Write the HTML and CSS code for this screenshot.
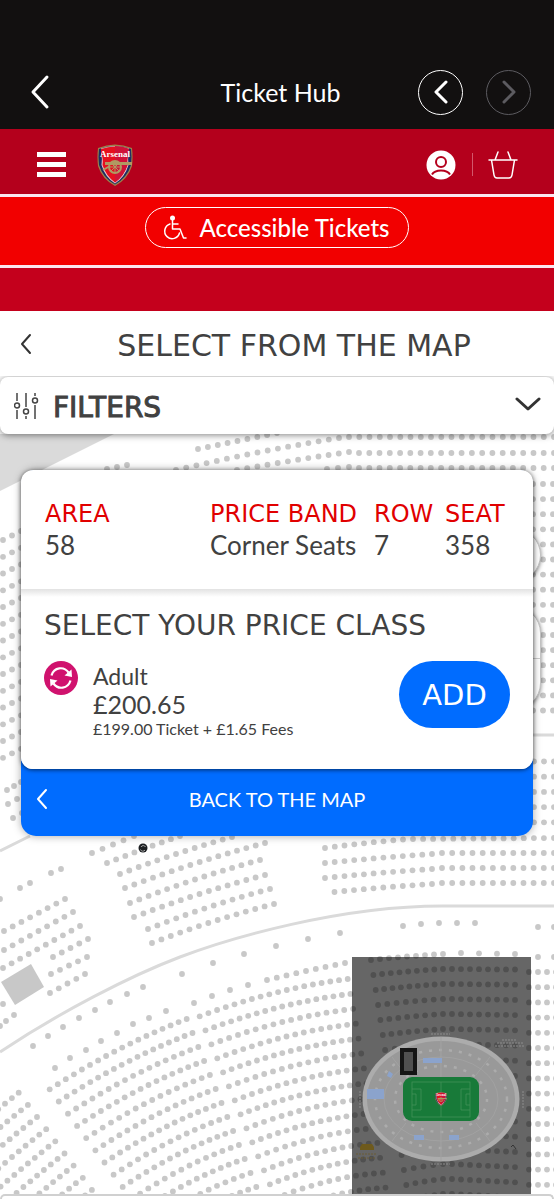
FILE: index.html
```html
<!DOCTYPE html>
<html lang="en">
<head>
<meta charset="utf-8">
<meta name="viewport" content="width=device-width, initial-scale=1">
<title>Ticket Hub</title>
<link rel="stylesheet" href="styles.css">
</head>
<body>
<svg class="defs" aria-hidden="true">
  <symbol id="crest" viewBox="0 0 36 44">
    <path d="M1 5Q18-2 35 5Q36 14 35 23Q31 36 18 43Q5 36 1 23Q0 14 1 5Z" fill="#9c824a"/>
    <path d="M2 6Q18 0 34 6Q35 14 34 22Q30 35 18 41.500Q6 35 2 22Q1 14 2 6Z" fill="#1d2d64"/>
    <path d="M4 5.500Q18 .5 32 5.500V9Q30.500 16 31.500 22Q28 34 18 40.500Q8 34 4.500 22Q5.500 16 4 9Z" fill="#e8c9d0"/>
    <path d="M4 6Q18 1 32 6V9Q29.500 16 30.500 22Q27 33 18 39.500Q9 33 5.500 22Q6.500 16 4 9Z" fill="#e5101f"/>
    <path d="M18 3Q26 3 32 6V9Q29.500 16 30.500 22Q27 33 18 39.500Z" fill="#cf1238"/>
    <g fill="none" stroke="#b09a62" stroke-width="2">
      <path d="M8 20.500H35" stroke-width="3"/>
      <circle cx="18" cy="24" r="6"/>
      <path d="M12 24H24M18 18V30M14 20L22 28M22 20L14 28" stroke-width="1"/>
      <path d="M6 27L13 23"/>
    </g>
    <text x="18" y="14" text-anchor="middle" class="crest-name">Arsenal</text>
  </symbol>
</svg>

<header class="app-bar">
  <button class="app-back" aria-label="Back"><svg width="20" height="36" viewBox="0 0 20 36"><path d="M17 3L3 18L17 33"/></svg></button>
  <h1 class="app-title">Ticket Hub</h1>
  <div class="history">
    <button class="round" aria-label="Previous page"><svg width="14" height="24" viewBox="0 0 14 24"><path d="M12 2L2 12L12 22"/></svg></button>
    <button class="round round-off" aria-label="Next page" disabled><svg width="14" height="24" viewBox="0 0 14 24"><path d="M2 2L12 12L2 22"/></svg></button>
  </div>
</header>

<nav class="site-bar">
  <button class="menu" aria-label="Menu"><span></span><span></span><span></span></button>
  <a class="logo" href="#" aria-label="Home"><svg width="36" height="44"><use href="#crest"/></svg></a>
  <a class="account" href="#" aria-label="Account">
    <svg width="30" height="30" viewBox="0 0 30 30"><circle cx="15" cy="15" r="14.500" fill="#fff"/><g fill="none" stroke="#b4001c" stroke-width="2"><circle cx="15" cy="12" r="5"/><path d="M6 24.500C9 19 21 19 24 24.500"/></g></svg>
  </a>
  <a class="basket" href="#" aria-label="Basket">
    <svg width="30" height="30" viewBox="0 0 30 30" fill="none" stroke="#fff" stroke-width="1.500" stroke-linecap="round" stroke-linejoin="round"><path d="M1 10H29M3.500 10L6 25Q6.500 28 9 28H21Q23.500 28 24 25L26.500 10M7 10L10 2M23 10L20 2"/></svg>
  </a>
</nav>

<div class="access-bar">
  <a class="access-link" href="#">
    <svg width="24" height="26" viewBox="0 0 24 26"><circle cx="9.500" cy="3" r="2.500" fill="#fff"/><g fill="none" stroke="#fff" stroke-width="1.500" stroke-linecap="round" stroke-linejoin="round"><path d="M9.500 5V14H17L20.500 23H23M9.500 9H15"/><path d="M7 9A7.500 7.500 0 1 0 16.500 18"/></g></svg>
    Accessible Tickets
  </a>
</div>
<div class="strip"></div>

<div class="page-head">
  <button class="page-back" aria-label="Back"><svg width="12" height="22" viewBox="0 0 12 22"><path d="M10 2L2 11L10 20"/></svg></button>
  <h2>SELECT FROM THE MAP</h2>
</div>

<button class="filters">
  <svg width="28" height="28" viewBox="0 0 28 28" fill="none" stroke="#444" stroke-width="1.500"><path d="M3 1V9M3 18V27M12 1V15M12 24V27M21 1V4M21 13V27"/><circle cx="3" cy="13.500" r="2.500"/><circle cx="12" cy="19.500" r="2.500"/><circle cx="21" cy="8.500" r="2.500"/></svg>
  <span>FILTERS</span>
  <svg class="chevron" width="26" height="16" viewBox="0 0 26 16"><path d="M2 3L13 13L24 3"/></svg>
</button>

<main class="map">
  <svg class="seats" viewBox="0 434 554 765" preserveAspectRatio="xMinYMin slice" aria-hidden="true">
    <path d="M0 434H114L0 491Z" fill="#dadada"/>
    <path d="M1 982L31 964L44 987L15 1005Z" fill="#c8c8c8"/>
    <g fill="none" stroke="#dadada" stroke-width="3">
      <path d="M0 1052C60 1012 130 976 180 957S340 906 442 906H554"/>
      <path d="M0 851L30 836M530 735H554"/>
    </g>
    <g id="seat-dots" fill="#c8c8c8"></g>
    <circle cx="143" cy="848" r="4.500" fill="#1c1f22"/>
    <path d="M141 847A2.500 2.500 0 0 1 145.500 847M145 850A2.500 2.500 0 0 1 140.500 849.500" fill="none" stroke="#aaa"/>
  </svg>

  <button class="tool tool-reset" aria-label="Reset map"></button>
  <div class="tool tool-zoom"><button aria-label="Zoom in"></button><button aria-label="Zoom out"></button></div>

  <section class="ticket">
    <div class="card">
      <dl class="facts">
        <div><dt>AREA</dt><dd>58</dd></div>
        <div><dt>PRICE BAND</dt><dd>Corner Seats</dd></div>
        <div><dt>ROW</dt><dd>7</dd></div>
        <div><dt>SEAT</dt><dd>358</dd></div>
      </dl>
      <div class="price">
        <h3>SELECT YOUR PRICE CLASS</h3>
        <div class="option">
          <svg class="resale" width="34" height="34" viewBox="0 0 34 34"><circle cx="17" cy="17" r="17" fill="#d0126e"/><g fill="none" stroke="#fff" stroke-width="2.200"><path d="M7.500 14.500C10 6 20 5 24.500 11.500"/><path d="M26.500 19.500C24 28 14 29 9.500 22.500"/></g><path d="M20.500 14.500L28 16L27.500 8.500ZM13.500 19.500L6 18L6.500 25.500Z" fill="#fff"/></svg>
          <div class="amounts">
            <p class="kind">Adult</p>
            <p class="total">£200.65</p>
            <p class="split">£199.00 Ticket + £1.65 Fees</p>
          </div>
          <button class="add">ADD</button>
        </div>
      </div>
    </div>
    <button class="to-map">
      <svg width="12" height="22" viewBox="0 0 12 22"><path d="M10 2L2 11L10 20"/></svg>
      <span>BACK TO THE MAP</span>
    </button>
  </section>

  <aside class="overview" aria-label="Stadium overview">
    <svg viewBox="0 0 179 237">
      <ellipse cx="89" cy="142" rx="78.500" ry="62.500" fill="#acacac"/>
      <ellipse cx="89" cy="142" rx="74" ry="58" fill="#999"/>
      <g fill="none" stroke="#acacac" stroke-width="2.500" stroke-dasharray="3 7">
        <ellipse cx="89" cy="142" rx="66" ry="49"/>
        <ellipse cx="89" cy="142" rx="46" ry="33"/>
      </g>
      <g fill="none" stroke="#a2a2a2" stroke-width="1"><ellipse cx="89" cy="142" rx="57" ry="42"/><path d="M40 100L54 118M138 100L124 118M40 184L54 166M138 184L124 166M89 80V120M89 164V204"/></g>
      <g fill="#8ba3cc"><path d="M71 101H90V106H71ZM15 132H32V142H15ZM62 178H72V183H62ZM97 178H107V183H97ZM37 114L41 117L39 121L35 119Z"/></g>
      <rect x="51" y="120" width="76" height="44" rx="9" fill="#187a39"/>
      <g fill="none" stroke="#439258" stroke-width=".8"><rect x="60" y="125" width="58" height="35"/><path d="M89 125V160M60 132H69V153H60M118 132H109V153H118M60 137H64V148H60M118 137H114V148H118"/></g>
      <svg x="83" y="134" width="12" height="16"><use href="#crest"/></svg>
      <rect x="50" y="93" width="13" height="23" fill="#505050" stroke="#151515" stroke-width="4"/>
      <g stroke="#8c8c8c" stroke-width="1" stroke-dasharray="2 1"><path d="M79 77H98M79 207H98M8 134V152M171 134V152M150 83H165M145 86H172M143 89H172"/></g>
      <path d="M8 190L10 187H20L22 190V193H8Z" fill="#6e5a1d"/>
      <path d="M4 197H25M6 201H23" stroke="#6b5d35" stroke-width="1" stroke-dasharray="2 1"/>
      <path d="M159 190L161 188L164 192" fill="none" stroke="#333"/>
    </svg>
  </aside>
</main>
<div class="sheet"></div>
<script src="seats.js"></script>
</body>
</html>
```
FILE: styles.css
```css
* { box-sizing: border-box; }

body {
  margin: 0;
  min-height: 100vh;
  display: flex;
  flex-direction: column;
  background: #fff;
  color: #414141;
  font-family: Lato, "Noto Sans", sans-serif;
}

button {
  margin: 0;
  padding: 0;
  border: 0;
  background: none;
  color: inherit;
  font: inherit;
}

h1, h2, h3, p, dl, dd { margin: 0; font-weight: 400; }
a { color: inherit; text-decoration: none; }
svg { display: block; }

.defs { display: none; }
.crest-name { font: 700 9px "Liberation Serif", serif; fill: #fff; }

.app-back path, .round path, .page-back path, .chevron path, .to-map path {
  fill: none;
  stroke: currentColor;
  stroke-width: 3;
  stroke-linecap: round;
  stroke-linejoin: round;
}

.app-bar {
  display: grid;
  grid-template-columns: 1fr auto 1fr;
  align-items: center;
  padding: 55px 23px 0 30px;
  height: 129px;
  background: #121010;
  color: #fff;
}
.app-back { justify-self: start; }
.app-title { font-size: 25px; line-height: 32px; }
.history { display: flex; justify-content: flex-end; gap: 23px; }
.round {
  display: grid;
  place-items: center;
  width: 45px;
  height: 45px;
  border: 1px solid #fff;
  border-radius: 50%;
}
.round-off { color: #5c5b60; border-color: #5c5b60; }

.site-bar {
  display: flex;
  align-items: center;
  height: 65px;
  padding: 6px 36px 0 37px;
  background: #b4001c;
}
.menu { display: flex; flex-direction: column; gap: 5px; width: 29px; }
.menu span { height: 5px; background: #fff; }
.logo { margin-left: 31px; }
.account { margin-left: auto; padding-right: 16px; }
.basket { padding-left: 16px; position: relative; }
.basket::before {
  content: "";
  position: absolute;
  left: 0;
  top: 3px;
  height: 23px;
  border-left: 1px solid #d3576b;
}

.access-bar {
  display: flex;
  justify-content: center;
  align-items: flex-start;
  height: 74px;
  padding-top: 10px;
  background: #f20000;
  border-top: 3px solid #fbe6ee;
  border-bottom: 3px solid #fbe6ee;
}
.access-link {
  display: flex;
  align-items: center;
  gap: 12px;
  height: 41px;
  padding: 0 18px 0 17px;
  border: 1px solid #fff;
  border-radius: 21px;
  color: #fff;
  font-size: 24px;
  font-weight: 500;
}
.strip { height: 43px; background: #c4001c; }

.page-head {
  display: flex;
  align-items: center;
  height: 66px;
  padding: 0 20px;
}
.page-back { color: #333; }
.page-back path, .to-map path { stroke-width: 2; }
.page-head h2 {
  flex: 1;
  padding-top: 2px;
  padding-left: 22px;
  text-align: center;
  font: 30px "DejaVu Sans", sans-serif;
}

.filters {
  display: flex;
  align-items: center;
  position: relative;
  z-index: 2;
  height: 57px;
  padding: 0 13px 0 14px;
  gap: 11px;
  background: #fff;
  border-radius: 8px;
  box-shadow: 0 1px 7px rgba(0, 0, 0, .5);
  clip-path: inset(-1px 0 -12px 0);
}
.filters span { font: 28px "DejaVu Sans", sans-serif; -webkit-text-stroke: 1px currentColor; padding-top: 3px; }
.chevron { margin-left: auto; margin-bottom: 4px; color: #333; }

.map { position: relative; flex: 1; overflow: hidden; padding: 36px 21px 0; }
.seats { position: absolute; inset: 0; width: 100%; height: 100%; }

.tool {
  position: absolute;
  right: 13px;
  width: 54px;
  background: #fff;
  border: 1px solid #c4c4c4;
  border-radius: 27px;
  box-shadow: 0 1px 4px rgba(0, 0, 0, .5);
}
.tool-reset { top: 94px; height: 54px; }
.tool-zoom { top: 172px; height: 104px; display: grid; overflow: hidden; }
.tool-zoom button + button { border-top: 1px solid #ccc; }

.ticket {
  position: relative;
  background: #006cff;
  border-radius: 15px;
  box-shadow: 0 0 9px rgba(0, 0, 0, .35);
}
.card {
  background: #fff;
  border-radius: 12px;
  box-shadow: 0 1px 4px rgba(0, 0, 0, .6);
}
.facts {
  display: grid;
  grid-template-columns: 165fr 164fr 71fr 64fr;
  height: 119px;
  padding: 30px 24px 0;
  white-space: nowrap;
}
.facts dt { font: 24px/28px "DejaVu Sans", sans-serif; color: #e10000; }
.facts dd { font-size: 26px; line-height: 34px; }
.price {
  height: 180px;
  padding: 22px 23px 0 23px;
  border-radius: 0 0 12px 12px;
  background: linear-gradient(#e2e2e2, #fff 8px);
}
.price h3 { font: 28px/30px "DejaVu Sans", sans-serif; white-space: nowrap; }
.option { display: flex; align-items: flex-start; gap: 15px; padding-top: 20px; }
.amounts { flex: 1; padding-top: 1px; }
.kind { font-size: 23px; line-height: 28px; }
.total { font-size: 25px; line-height: 28px; }
.split { font-size: 16px; line-height: 22px; }
.add {
  width: 111px;
  height: 67px;
  border-radius: 34px;
  background: #006cff;
  color: #fff;
  font: 29px "DejaVu Sans", sans-serif;
}
.to-map {
  display: flex;
  align-items: center;
  width: 100%;
  height: 67px;
  padding: 0 15px 8px;
  color: #fff;
  font-size: 20px;
}
.to-map span { flex: 1; padding-right: 12px; }

.overview {
  position: absolute;
  right: 23px;
  bottom: 0;
  width: 179px;
  background: rgba(0, 0, 0, .6);
}

.sheet {
  height: 5px;
  border: 2px solid #d0d0d0;
  border-bottom: 0;
  border-radius: 10px 10px 0 0;
}
```
FILE: seats.js
```javascript
const layer = document.getElementById("seat-dots");

function dot(x, y) {
  const c = document.createElementNS("http://www.w3.org/2000/svg", "circle");
  c.setAttribute("cx", x.toFixed(1));
  c.setAttribute("cy", y.toFixed(1));
  c.setAttribute("r", 2.9);
  layer.appendChild(c);
}

// One row of seats on an arc from (x1, y1) to (x2, y2).
function row(x1, y1, x2, y2, pitch, bulge = 0) {
  const n = Math.max(1, Math.round(Math.hypot(x2 - x1, y2 - y1) / pitch));
  for (let i = 0; i <= n; i++) {
    const t = i / n;
    dot(x1 + (x2 - x1) * t, y1 + (y2 - y1) * t - 2 * bulge * t * (1 - t));
  }
}

// A block of rows; each row moves its two ends by a fixed step.
function block(count, [x1, y1, x2, y2], [a, b, c, d], pitch, bulge) {
  for (let k = 0; k < count; k++) {
    row(x1 + a * k, y1 + b * k, x2 + c * k, y2 + d * k, pitch, bulge);
  }
}

// Upper stand
row(198, 449, 277, 433, 10);
row(176, 470, 339, 438, 10.3, 3);
row(349, 437, 554, 437, 10.2);
row(237, 470, 349, 452, 10.3, 1);
row(359, 453, 554, 453, 10.2);
row(327, 469, 349, 467, 10.3);
row(359, 468, 554, 468, 10.2);
row(107, 469, 127, 465, 10);
block(16, [533, 484, 553, 484], [0, 15.1, 0, 15.1], 10, 0);
block(14, [3, 540, 21, 531], [0, 16.75, 0, 16.75], 9.5, 0);
row(7, 790, 21, 782, 9.5);
row(8, 804, 17, 799, 9.5);
row(13, 818, 22, 813, 9.5);
block(5, [534, 761.5, 554, 761.5], [0, 15.2, 0, 15.2], 10, 0);

// Middle stand
row(325, 848, 403, 839.5, 9.8, 1);
row(413, 839, 554, 838, 9.9);
row(325, 863, 432, 854, 9.8, 1);
row(442, 853, 554, 853, 9.9);
row(325, 878, 432, 869, 9.8, 1);
row(442, 868, 554, 868, 9.9);
row(334.5, 892, 432, 884, 9.8, 1);
row(442, 883, 554, 883, 9.9);
row(92, 853, 134, 836, 11);
row(107, 863, 180, 836, 9.8, 1);
row(120, 874, 232, 837, 9.7, 3);
row(125, 888, 265, 843, 9.7, 4);
row(130, 903, 260, 860, 9.7, 4);
row(134, 917, 265, 875, 9.7, 4);
row(148, 929, 270, 889, 9.7, 4);
row(152, 943, 274, 904, 9.7, 4);
row(4, 931, 65, 899, 9.7);
row(4, 950, 73, 912, 9.7);
row(3, 968, 80, 926, 9.7);
row(53, 957, 88, 939, 9.7);
row(51, 974, 87, 957, 9.7);
row(50, 993, 85, 974, 9.7);

// Lower stand
block(15, [49.7, 1089.3, 186.7, 1019], [9.13, 12.2, 5.8, 14], 9, 9);
block(15, [199.7, 1016.3, 347.7, 979], [5.85, 14, 2.7, 14.9], 8.9, 9);
row(267, 980, 345, 963, 9.9, 1);
block(17, [371, 960, 443, 954], [2.35, 15, 0, 15], 9, 1);
block(16, [452, 969, 515, 969.5], [0, 15, 0, 15.2], 9, 0);
row(461, 953, 515, 954, 18);
block(15, [529, 972, 556, 972], [0, 15.2, 0, 15.2], 9, 0);
block(9, [-36, 1138, 18.7, 1092.7], [9.15, 12.15, 9.15, 12.15], 8.9, 1);

// Front seats, set apart from the blocks
[
  [51, 873], [61, 869], [30, 883], [20, 888], [0, 899],
  [3, 1004], [6, 1021], [14, 1015], [0, 1026],
  [33, 1046], [48, 1036], [63, 1027], [79, 1018], [95, 1010], [110, 1002],
  [127, 994], [143, 987], [182, 974], [213, 963], [244, 954], [276, 946],
  [308, 939], [340, 933],
  [403, 926], [421, 924], [439, 923], [457, 923], [475, 923], [538, 927], [554, 927],
  [538, 957], [554, 957],
  [55, 1068], [70, 1058], [86, 1050], [101, 1041], [117, 1033], [133, 1024],
  [149, 1018], [166, 1011], [194, 1003], [212, 996], [230, 990], [248, 985]
].forEach(([x, y]) => dot(x, y));
```
